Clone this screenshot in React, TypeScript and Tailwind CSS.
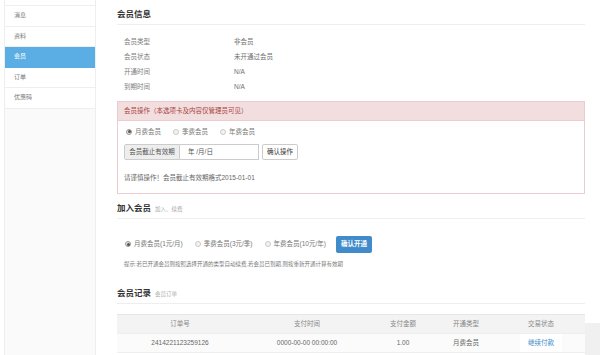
import React from "react";

const menu = [
  { label: "消息" },
  { label: "资料" },
  { label: "会员", active: true },
  { label: "订单" },
  { label: "优惠码" },
];

const info = [
  { label: "会员类型", value: "非会员" },
  { label: "会员状态", value: "未开通过会员" },
  { label: "开通时间", value: "N/A" },
  { label: "到期时间", value: "N/A" },
];

const cols = [
  { title: "订单号", value: "2414221123259126", w: "w-[126px]" },
  { title: "支付时间", value: "0000-00-00 00:00:00", w: "w-[128px]" },
  { title: "支付金额", value: "1.00", w: "w-[64px]" },
  { title: "开通类型", value: "月费会员", w: "w-[62px]" },
];

function Radio({ checked }: { checked?: boolean }) {
  return (
    <span
      className={`inline-flex h-[6px] w-[6px] shrink-0 items-center justify-center rounded-full border ${
        checked ? "border-[#9a9a9a] bg-[#e2e2e2]" : "border-[#c9c9c9] bg-[#f3f3f3]"
      }`}
    >
      {checked && <span className="h-[3px] w-[3px] rounded-full bg-[#555]" />}
    </span>
  );
}

function Heading({ title, sub }: { title: string; sub?: string }) {
  return (
    <div className="flex h-[16px] items-start gap-[4px] border-b border-[#eeeeee]">
      <span className="text-[8.5px] font-bold leading-[10px] text-[#333]">{title}</span>
      {sub && <span className="pt-[2px] text-[5.5px] leading-[8px] text-[#aaa]">{sub}</span>}
    </div>
  );
}

export default function App() {
  return (
    <div className="flex h-[355px] w-[600px] overflow-hidden bg-white font-['Liberation_Sans','Noto_Sans_CJK_SC',sans-serif] text-[6.5px] text-[#666]">
      {/* 左侧菜单 */}
      <aside className="ml-[4px] flex w-[92px] shrink-0 flex-col border-x border-[#eeeeee] bg-[#fafafa]">
        <div className="h-[6px] shrink-0 border-b border-[#eeeeee] bg-white" />
        {menu.map((m) => (
          <div
            key={m.label}
            className={`flex h-[20.5px] shrink-0 items-center border-b pl-[9px] text-[6px] ${
              m.active ? "border-[#5aaee3] bg-[#5aaee3] text-white" : "border-[#eeeeee] bg-white text-[#777]"
            }`}
          >
            {m.label}
          </div>
        ))}
      </aside>

      <main className="ml-[21px] flex w-[468px] shrink-0 flex-col pt-[9px]">
        {/* 会员信息 */}
        <Heading title="会员信息" />
        <div className="pt-[10px]">
          {info.map((r) => (
            <div key={r.label} className="flex h-[14.7px] items-center pl-[7px]">
              <span className="w-[110px] text-[#808080]">{r.label}</span>
              <span className="text-[#707070]">{r.value}</span>
            </div>
          ))}
        </div>

        {/* 管理员操作 */}
        <div className="mt-[7px] border border-[#ebccd1]">
          <div className="flex h-[19px] items-center border-b border-[#ebccd1] bg-[#f2dede] pl-[6px] text-[#a94442]">
            会员操作（本选项卡及内容仅管理员可见）
          </div>
          <div className="px-[6px] pb-[10px] pt-[6px]">
            <div className="flex h-[10px] items-center pl-[2px]">
              <Radio checked />
              <span className="ml-[3px] mr-[12px] text-[#777]">月费会员</span>
              <Radio />
              <span className="ml-[3px] mr-[12px] text-[#777]">季费会员</span>
              <Radio />
              <span className="ml-[3px] text-[#777]">年费会员</span>
            </div>
            <div className="mt-[7px] flex h-[16px] items-stretch">
              <div className="flex w-[56px] items-center justify-center rounded-l-[2px] border border-[#cccccc] bg-[#eeeeee] text-[#555]">
                会员截止有效期
              </div>
              <div className="flex w-[79px] items-center border-y border-r border-[#cccccc] pl-[8px] text-[#555]">
                年 /月/日
              </div>
              <div className="ml-[3px] flex w-[36px] items-center justify-center rounded-[2px] border border-[#cccccc] bg-white text-[#333]">
                确认操作
              </div>
            </div>
            <div className="mt-[13px] leading-[10px] text-[#666]">请谨慎操作！会员截止有效期格式2015-01-01</div>
          </div>
        </div>

        {/* 加入会员 */}
        <div className="mt-[9px]">
          <Heading title="加入会员" sub="加入、续费" />
        </div>
        <div className="mt-[17px] flex h-[17px] items-center pl-[8px]">
          <Radio checked />
          <span className="ml-[3px] mr-[12px] text-[#777]">月费会员(1元/月)</span>
          <Radio />
          <span className="ml-[3px] mr-[12px] text-[#777]">季费会员(3元/季)</span>
          <Radio />
          <span className="ml-[3px] mr-[10px] text-[#777]">年费会员(10元/年)</span>
          <div className="flex h-[17px] w-[36px] items-center justify-center rounded-[2px] bg-[#428bca] font-bold text-white">
            确认开通
          </div>
        </div>
        <div className="mt-[6px] pl-[7px] text-[5.5px] leading-[10px] text-[#777]">
          提示:若已开通会员则按照选择开通的类型自动续费,若会员已到期,则按重新开通计算有效期
        </div>

        {/* 会员记录 */}
        <div className="mt-[19px]">
          <Heading title="会员记录" sub="会员订单" />
        </div>
        <div className="mt-[10px] border-t border-[#e6e6e6]">
          <div className="flex h-[19px] items-center border-b border-[#eeeeee] bg-[#f3f3f3] text-[#888]">
            {cols.map((c) => (
              <div key={c.title} className={`${c.w} text-center`}>
                {c.title}
              </div>
            ))}
            <div className="flex-1 text-center">交易状态</div>
          </div>
          <div className="flex h-[19px] items-center border-b border-[#eeeeee] bg-[#fbfbfb] text-[#666]">
            {cols.map((c) => (
              <div key={c.title} className={`${c.w} text-center`}>
                {c.value}
              </div>
            ))}
            <div className="flex flex-1 items-stretch justify-center self-stretch">
              <span className="flex items-center bg-white px-[8px] text-[#428bca]">继续付款</span>
            </div>
          </div>
        </div>
      </main>

      <div className="flex w-[15px] shrink-0 flex-col">
        <div className="h-[323px]" />
        <div className="flex-1 bg-[#f0f0f0]" />
      </div>
    </div>
  );
}
